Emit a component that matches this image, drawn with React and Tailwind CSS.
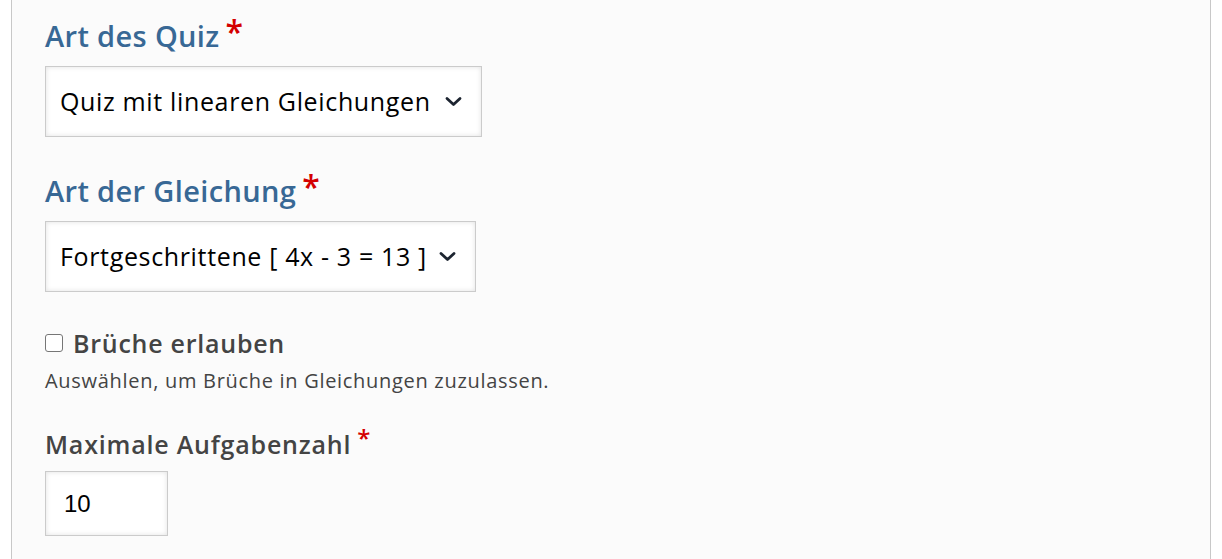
import { useState } from 'react';

function Required({ small }) {
  return small ? (
    <span className="ml-[6px] -mt-[2px] text-[24px] leading-[28px] font-semibold tracking-normal text-[#d40000]">*</span>
  ) : (
    <span className="ml-[6px] mt-[2px] text-[32px] leading-[30px] font-semibold tracking-normal text-[#d40000]">*</span>
  );
}

function Chevron() {
  return (
    <svg width="17" height="11" viewBox="0 0 17 11" className="pointer-events-none">
      <path d="M2 2.5 L8.5 8.5 L15 2.5" fill="none" stroke="#1c2430" strokeWidth="2.8" strokeLinecap="round" strokeLinejoin="round" />
    </svg>
  );
}

function SelectField({ label, value, options, onChange, widthClass }) {
  return (
    <div className="mb-[33px]">
      <label className="flex items-start text-[29px] leading-[42px] font-semibold tracking-[0.35px] text-[#386895]">
        {label}
        <Required />
      </label>
      <div className={`relative mt-[9px] ${widthClass}`}>
        <select
          value={value}
          onChange={(e) => onChange(e.target.value)}
          className="w-full h-[71px] appearance-none bg-white border border-[#cbcbcb] shadow-[inset_0_0_5px_rgba(0,0,0,0.12)] pl-[14px] pr-[48px] text-[25px] tracking-[0.65px] text-black outline-none"
        >
          {options.map((o) => (
            <option key={o} value={o}>{o}</option>
          ))}
        </select>
        <div className="absolute right-[20px] top-0 h-full flex items-center">
          <Chevron />
        </div>
      </div>
    </div>
  );
}

export default function App() {
  const [quizType, setQuizType] = useState('Quiz mit linearen Gleichungen');
  const [equation, setEquation] = useState('Fortgeschrittene [ 4x - 3 = 13 ]');
  const [fractions, setFractions] = useState(false);
  const [maxTasks, setMaxTasks] = useState('10');

  return (
    <div className="min-h-screen bg-white font-['Open_Sans',sans-serif]">
      <div className="ml-[11px] w-[1200px] min-h-[559px] bg-[#fbfbfb] border-x border-[#c8c8c8] pl-[33px] pt-[15px]">
        <SelectField
          label="Art des Quiz"
          value={quizType}
          onChange={setQuizType}
          options={['Quiz mit linearen Gleichungen']}
          widthClass="w-[437px]"
        />
        <SelectField
          label="Art der Gleichung"
          value={equation}
          onChange={setEquation}
          options={['Fortgeschrittene [ 4x - 3 = 13 ]']}
          widthClass="w-[431px]"
        />

        <div className="mb-[32px]">
          <label className="flex items-center gap-[10px] text-[25px] leading-[36px] font-semibold tracking-[0.75px] text-[#444]">
            <input
              type="checkbox"
              checked={fractions}
              onChange={(e) => setFractions(e.target.checked)}
              className="w-[18px] h-[18px] m-0 appearance-none rounded-[3px] border-[1.5px] border-[#767676] bg-white checked:bg-[#386895]"
            />
            Brüche erlauben
          </label>
          <p className="mt-[6px] text-[20px] leading-[27px] text-[#444] tracking-[0.7px]">
            Auswählen, um Brüche in Gleichungen zuzulassen.
          </p>
        </div>

        <div>
          <label className="flex items-start text-[25px] leading-[36px] font-semibold tracking-[0.8px] text-[#444]">
            Maximale Aufgabenzahl
            <Required small />
          </label>
          <input
            type="text"
            value={maxTasks}
            onChange={(e) => setMaxTasks(e.target.value)}
            className="mt-[9px] block w-[123px] h-[65px] bg-white border border-[#cbcbcb] shadow-[inset_0_0_5px_rgba(0,0,0,0.12)] pl-[18px] text-[24px] text-black font-['Liberation_Sans',sans-serif] outline-none"
          />
        </div>
      </div>
    </div>
  );
}
